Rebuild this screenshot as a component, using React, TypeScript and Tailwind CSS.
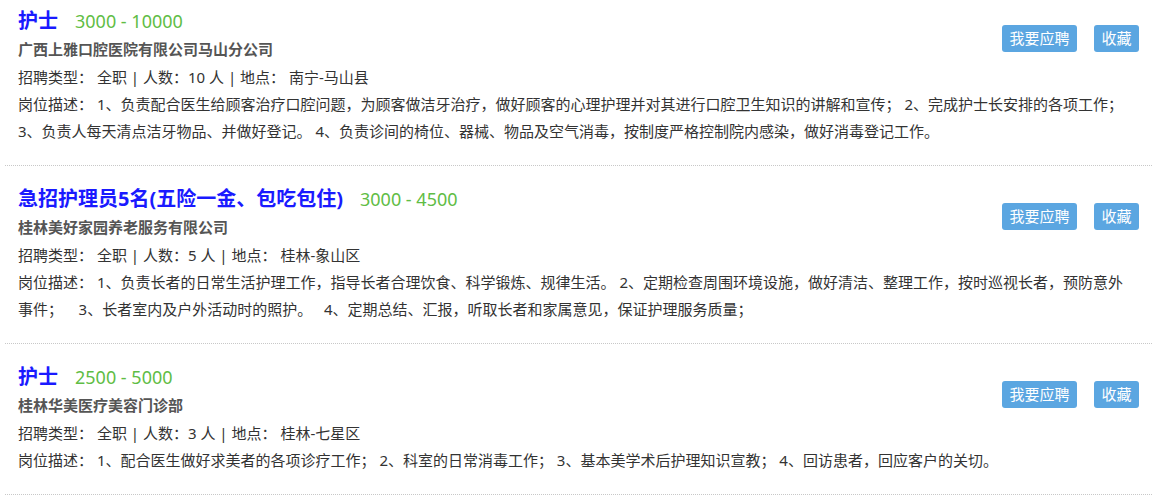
const jobs = [
  {
    title: "护士",
    salary: "3000 - 10000",
    company: "广西上雅口腔医院有限公司马山分公司",
    count: "10",
    place: "南宁-马山县",
    desc: "1、负责配合医生给顾客治疗口腔问题，为顾客做洁牙治疗，做好顾客的心理护理并对其进行口腔卫生知识的讲解和宣传； 2、完成护士长安排的各项工作； 3、负责人每天清点洁牙物品、并做好登记。 4、负责诊间的椅位、器械、物品及空气消毒，按制度严格控制院内感染，做好消毒登记工作。",
  },
  {
    title: "急招护理员5名(五险一金、包吃包住)",
    salary: "3000 - 4500",
    company: "桂林美好家园养老服务有限公司",
    count: "5",
    place: "桂林-象山区",
    desc: "1、负责长者的日常生活护理工作，指导长者合理饮食、科学锻炼、规律生活。 2、定期检查周围环境设施，做好清洁、整理工作，按时巡视长者，预防意外事件；\u00a0\u00a0\u00a0 3、长者室内及户外活动时的照护。\u00a0\u00a0 4、定期总结、汇报，听取长者和家属意见，保证护理服务质量；",
  },
  {
    title: "护士",
    salary: "2500 - 5000",
    company: "桂林华美医疗美容门诊部",
    count: "3",
    place: "桂林-七星区",
    desc: "1、配合医生做好求美者的各项诊疗工作； 2、科室的日常消毒工作； 3、基本美学术后护理知识宣教； 4、回访患者，回应客户的关切。",
  },
]

export default function App() {
  return (
    <div className="min-h-[495px] bg-white font-['Noto_Sans','Noto_Sans_CJK_SC',sans-serif] text-[15px] text-[#333]">
      <div className="ml-[5px] mr-[3px]">
        {jobs.map((job, i) => (
          <div
            key={i}
            className={`border-b border-dotted border-[#c8c8c8] pb-[20px] pl-[13px] pr-[13px] ${
              i === 0 ? "pt-[7px]" : "pt-[19px]"
            }`}
          >
            <div className="flex justify-between">
              <div>
                {/* title + salary */}
                <div className="flex h-[28px] items-center">
                  <span className="text-[20px] font-bold leading-[28px] text-[#1a1aff]">{job.title}</span>
                  <span className="ml-[17px] text-[18px] leading-[28px] text-[#5fbd45]">{job.salary}</span>
                </div>
                <div className="text-[15px] font-bold leading-[28px] text-[#555]">{job.company}</div>
                <div className="leading-[28px]">
                  招聘类型： 全职 | 人数：{job.count} 人 | 地点： {job.place}
                </div>
              </div>
              <div className="flex gap-[17px] pt-[18px]">
                <button className="h-[27px] w-[75px] rounded-[3px] bg-[#5ba6e1] text-[15px] text-white">
                  我要应聘
                </button>
                <button className="h-[27px] w-[45px] rounded-[3px] bg-[#5ba6e1] text-[15px] text-white">
                  收藏
                </button>
              </div>
            </div>
            <p className="mr-[6px] leading-[27px]">岗位描述： {job.desc}</p>
          </div>
        ))}
      </div>
    </div>
  )
}
